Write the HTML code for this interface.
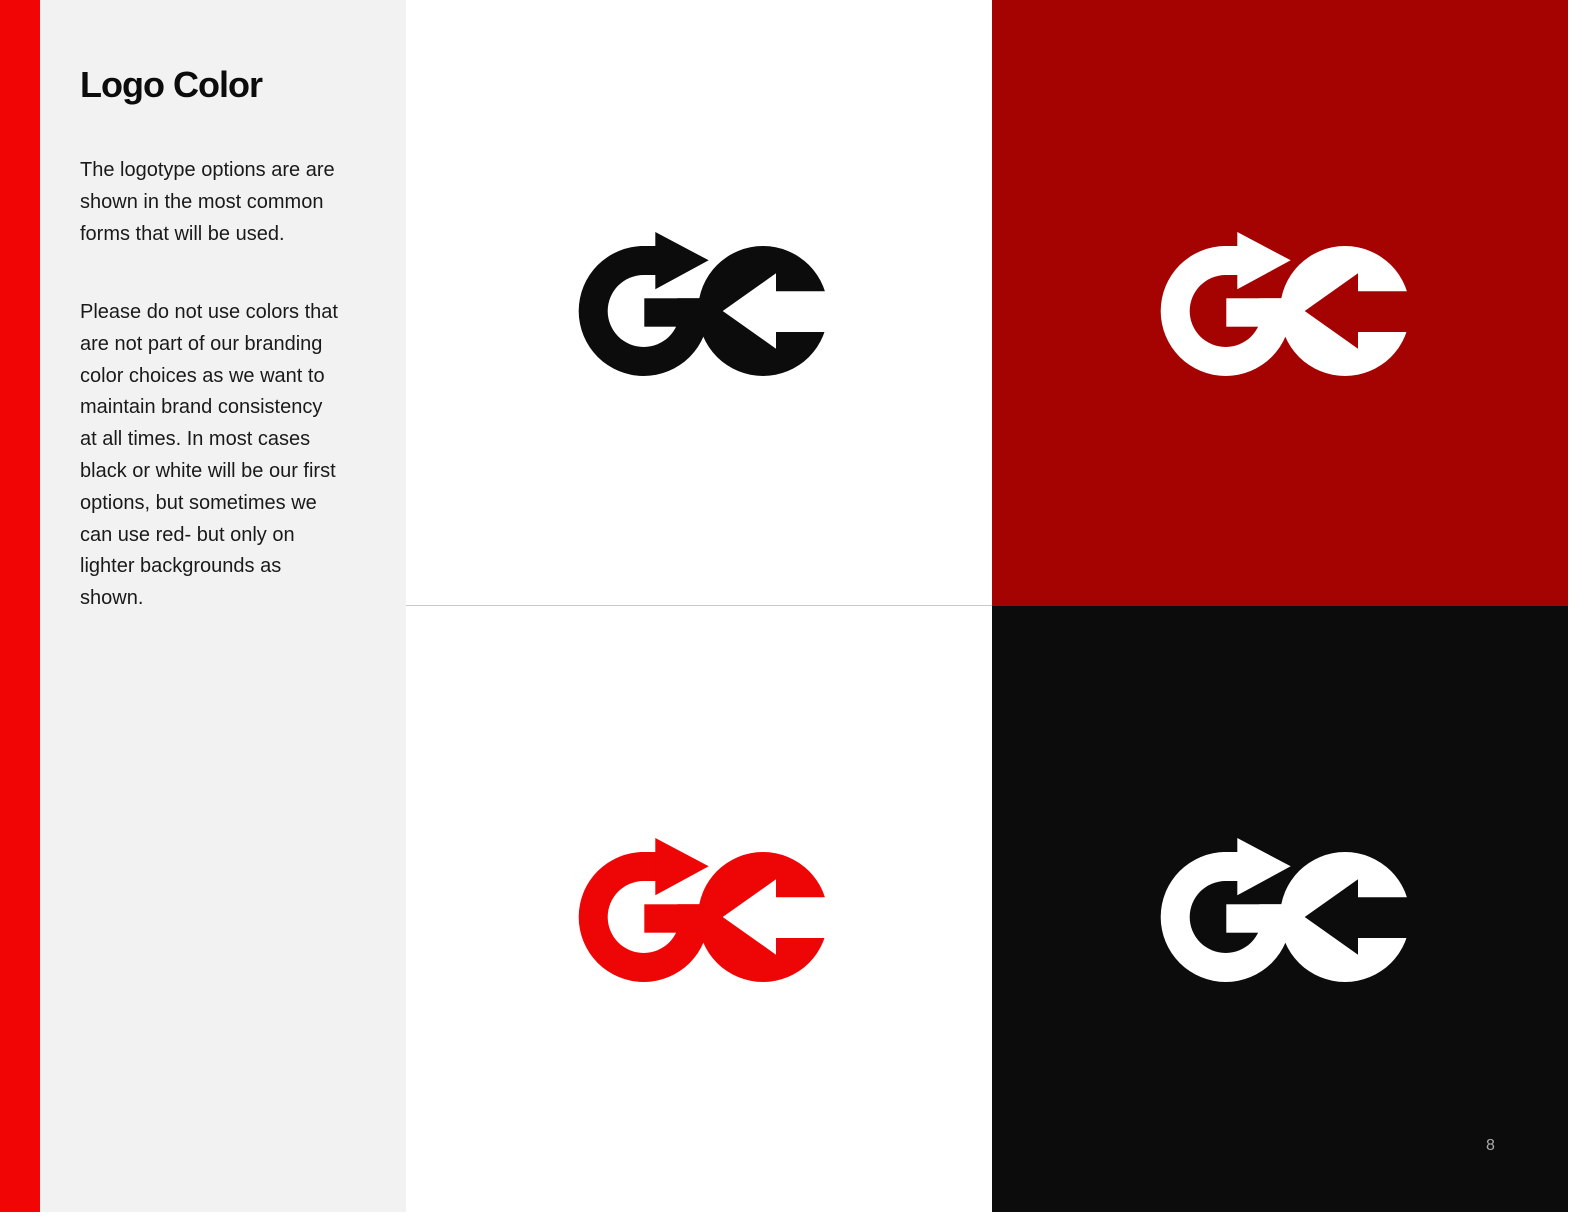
<!DOCTYPE html>
<html><head><meta charset="utf-8"><style>
*{margin:0;padding:0}
body{width:1584px;height:1224px;position:relative;background:#fff;overflow:hidden;font-family:"Liberation Sans",sans-serif}
.a{position:absolute}
h1{position:absolute;left:80px;top:64px;font-size:36px;font-weight:bold;color:#0c0c0c;letter-spacing:-1px}
p{position:absolute;left:80px;width:320px;font-size:20px;line-height:31.8px;color:#1a1a1a;white-space:nowrap}
svg{position:absolute}
</style></head><body>
<div class="a" style="left:0;top:0;width:40px;height:1212px;background:#f20505"></div>
<div class="a" style="left:40px;top:0;width:366px;height:1212px;background:#f2f2f2"></div>
<div class="a" style="left:406px;top:605px;width:586px;height:1px;background:#c8c8c8"></div>
<div class="a" style="left:992px;top:0;width:576px;height:606px;background:#a50202"></div>
<div class="a" style="left:992px;top:606px;width:576px;height:606px;background:#0c0c0c"></div>
<h1>Logo Color</h1>
<p style="top:155px">The logotype options are are<br>shown in the most common<br>forms that will be used.</p>
<p style="top:297px">Please do not use colors that<br>are not part of our branding<br>color choices as we want to<br>maintain brand consistency<br>at all times. In most cases<br>black or white will be our first<br>options, but sometimes we<br>can use red- but only on<br>lighter backgrounds as<br>shown.</p>
<div class="a" style="left:1486px;top:1137px;font-size:16px;color:#aaa">8</div>

<svg width="0" height="0" style="position:absolute">
<defs>
<clipPath id="gc"><path d="M-5,-5 H66.3 V67.3 H300 V200 H-5 Z"/></clipPath>
</defs>
</svg>

<svg style="left:578px;top:231px" width="270" height="150" viewBox="0 0 270 150">
<circle cx="65.7" cy="80" r="65" fill="#0c0c0c" clip-path="url(#gc)"/><circle cx="65.7" cy="80" r="36" fill="#fff"/>
<g fill="#0c0c0c"><rect x="66.3" y="67.3" width="70" height="28.4"/><rect x="62" y="15" width="16" height="29"/><polygon points="77.3,1 130.7,29.3 77.3,58.3"/><circle cx="185" cy="80" r="65"/></g>
<polygon fill="#fff" points="144.7,80 198,42.3 198,60.3 260,60.3 260,101 198,101 198,117.7"/>
</svg>

<svg style="left:1160px;top:231px" width="270" height="150" viewBox="0 0 270 150">
<circle cx="65.7" cy="80" r="65" fill="#fff" clip-path="url(#gc)"/><circle cx="65.7" cy="80" r="36" fill="#a50202"/>
<g fill="#fff"><rect x="66.3" y="67.3" width="70" height="28.4"/><rect x="62" y="15" width="16" height="29"/><polygon points="77.3,1 130.7,29.3 77.3,58.3"/><circle cx="185" cy="80" r="65"/></g>
<polygon fill="#a50202" points="144.7,80 198,42.3 198,60.3 260,60.3 260,101 198,101 198,117.7"/>
</svg>

<svg style="left:578px;top:837px" width="270" height="150" viewBox="0 0 270 150">
<circle cx="65.7" cy="80" r="65" fill="#ee0505" clip-path="url(#gc)"/><circle cx="65.7" cy="80" r="36" fill="#fff"/>
<g fill="#ee0505"><rect x="66.3" y="67.3" width="70" height="28.4"/><rect x="62" y="15" width="16" height="29"/><polygon points="77.3,1 130.7,29.3 77.3,58.3"/><circle cx="185" cy="80" r="65"/></g>
<polygon fill="#fff" points="144.7,80 198,42.3 198,60.3 260,60.3 260,101 198,101 198,117.7"/>
</svg>

<svg style="left:1160px;top:837px" width="270" height="150" viewBox="0 0 270 150">
<circle cx="65.7" cy="80" r="65" fill="#fff" clip-path="url(#gc)"/><circle cx="65.7" cy="80" r="36" fill="#0c0c0c"/>
<g fill="#fff"><rect x="66.3" y="67.3" width="70" height="28.4"/><rect x="62" y="15" width="16" height="29"/><polygon points="77.3,1 130.7,29.3 77.3,58.3"/><circle cx="185" cy="80" r="65"/></g>
<polygon fill="#0c0c0c" points="144.7,80 198,42.3 198,60.3 260,60.3 260,101 198,101 198,117.7"/>
</svg>
</body></html>
